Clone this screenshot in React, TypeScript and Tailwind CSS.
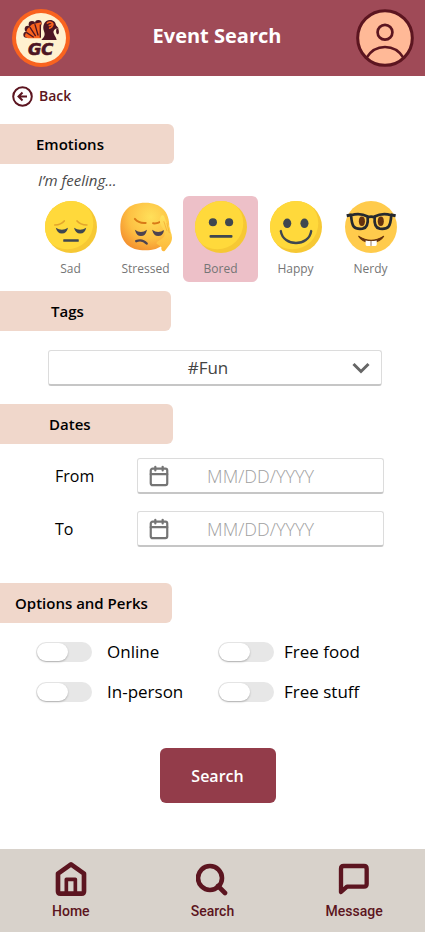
import { useState } from "react";
import type { ReactNode } from "react";
import { Calendar } from "lucide-react";

const INK = "#3f4750";

function Logo() {
  return (
    <svg viewBox="36 24 174 174" className="size-[58px]" role="img" aria-label="GC turkey logo">
      <circle cx="123" cy="111" r="87" fill="#f9631f" />
      <circle cx="123" cy="111" r="75" fill="#fff1cf" />
      <g fill="#4d1522">
        <circle cx="79" cy="101" r="9" />
        <circle cx="84" cy="84" r="10" />
        <circle cx="96" cy="70" r="10" />
        <circle cx="115" cy="67" r="10" />
      </g>
      <path d="M74 106 82 84 96 70 124 64 122 112H84Z" fill="#f9631f" />
      <g stroke="#4d1522" strokeWidth="4" strokeLinecap="round">
        <path d="M100 108 80 95" />
        <path d="M106 104 90 79" />
        <path d="M114 102 105 71" />
        <path d="M121 108V72" />
      </g>
      <path
        d="M124 117C134 108 136 101 132 91C126 75 133 57 150 57C161 57 167 64 168 73L177 83C171 82 166 84 166 84C160 88 159 93 162 99C165 106 169 111 170 117Z"
        fill="#4d1522"
      />
      <path d="M141 68C145 61 156 62 159 69C158 77 152 82 147 81M159 69 146 74" fill="none" stroke="#f9631f" strokeWidth="5" />
      <path d="M170 82c-3 8-2 16 2 18 5 1 6-8 3-16z" fill="#4d1522" />
      <text
        x="122"
        y="161"
        textAnchor="middle"
        fill="#4d1522"
        stroke="#4d1522"
        strokeWidth="2"
        fontSize="49"
        className="font-['DejaVu_Sans',sans-serif] font-bold italic"
      >
        GC
      </text>
    </svg>
  );
}

function Avatar() {
  return (
    <svg viewBox="431 29 172 172" className="size-[58px]" aria-hidden="true">
      <g fill="none" stroke="#5c1520" strokeWidth="9">
        <circle cx="517" cy="115" r="81" fill="#ffb997" />
        <circle cx="517" cy="98" r="22" strokeWidth="8" />
        <path d="M462 174C488 131 546 131 572 174" strokeWidth="8" />
      </g>
    </svg>
  );
}

function FaceBase({ id, children }: { id: string; children: ReactNode }) {
  return (
    <svg viewBox="0 0 154 154" className="size-[52px]" aria-hidden="true">
      <clipPath id={id}>
        <circle cx="77" cy="77" r="77" />
      </clipPath>
      <circle cx="77" cy="77" r="77" fill="#f6c834" />
      <circle cx="66" cy="66" r="77" fill="#ffd93b" clipPath={`url(#${id})`} />
      {children}
    </svg>
  );
}

function SadFace() {
  return (
    <FaceBase id="face-sad">
      <g fill={INK}>
        <path d="M32 79Q50 91 68 79Q65 96 50 96Q36 96 32 79Z" />
        <path d="M86 79Q104 91 122 79Q119 96 104 96Q90 96 86 79Z" />
        <rect x="54" y="113" width="46" height="8" rx="2" />
      </g>
      <g fill="none" stroke="#e3a52c" strokeWidth="5" strokeLinecap="round">
        <path d="M29 71Q48 70 57 59" />
        <path d="M95 59Q104 70 124 71" />
      </g>
    </FaceBase>
  );
}

function StressedFace() {
  return (
    <svg viewBox="0 0 154 154" className="size-[52px]" aria-hidden="true">
      <defs>
        <radialGradient id="stress-skin" cx="0.62" cy="0.3" r="0.75">
          <stop offset="0" stopColor="#ffe05a" />
          <stop offset="0.6" stopColor="#fdc043" />
          <stop offset="1" stopColor="#f4912f" />
        </radialGradient>
        <linearGradient id="stress-hand" x1="0" y1="0" x2="0" y2="1">
          <stop offset="0" stopColor="#ffe25c" />
          <stop offset="1" stopColor="#fdb93c" />
        </linearGradient>
      </defs>
      <path
        d="M75 5C122 5 146 32 146 76C146 122 121 146 75 146C28 146 1 122 1 76C1 31 28 5 75 5Z"
        fill="url(#stress-skin)"
      />
      <g fill="none" stroke="#d97a17" strokeWidth="6" strokeLinecap="round">
        <path d="M44 53Q56 67 76 65" />
        <path d="M98 66Q110 68 122 60" />
      </g>
      <g fill="#4d4350">
        <path d="M44 85Q62 98 80 85Q76 104 62 104Q49 104 44 85Z" />
        <path d="M95 85Q113 98 131 85Q127 104 113 104Q100 104 95 85Z" />
      </g>
      <path d="M48 119Q66 112 79 126" fill="none" stroke="#4d4350" strokeWidth="7" strokeLinecap="round" />
      <path
        d="M120 48C123 41 130 40 132 49L137 62C143 70 149 78 150 91C156 105 156 119 145 132L133 147C127 152 120 144 123 137L108 126C108 119 120 116 128 108C135 102 132 91 127 82C119 70 115 56 120 48Z"
        fill="url(#stress-hand)"
      />
      <g fill="none" stroke="#f3a52f" strokeWidth="2" strokeLinecap="round">
        <path d="M130 61 139 88" />
        <path d="M139 66 146 94" />
      </g>
    </svg>
  );
}

function BoredFace() {
  return (
    <FaceBase id="face-bored">
      <g fill={INK}>
        <circle cx="53" cy="63" r="12" />
        <circle cx="101" cy="63" r="12" />
        <rect x="43" y="101" width="68" height="8" rx="3" />
      </g>
    </FaceBase>
  );
}

function HappyFace() {
  return (
    <FaceBase id="face-happy">
      <g fill={INK}>
        <ellipse cx="51" cy="66" rx="12" ry="14" />
        <ellipse cx="102" cy="66" rx="12" ry="14" />
      </g>
      <path d="M32 89C39 136 115 136 122 89" fill="none" stroke={INK} strokeWidth="7" strokeLinecap="round" />
    </FaceBase>
  );
}

function NerdyFace() {
  return (
    <svg viewBox="0 0 154 154" className="size-[52px]" aria-hidden="true">
      <circle cx="77" cy="77" r="77" fill="#ffcb4c" />
      <g fill="#65320f">
        <ellipse cx="50" cy="60" rx="9" ry="14" />
        <ellipse cx="106" cy="60" rx="9" ry="14" />
      </g>
      <g fill="none" stroke="#26292f" strokeWidth="8" strokeLinejoin="round">
        <path d="M18 42C35 37 52 38 67 46C69 66 65 80 52 82C26 85 20 76 18 42Z" />
        <path d="M137 42C120 37 103 38 88 46C86 66 90 80 103 82C129 85 135 76 137 42Z" />
        <path d="M67 48Q77 44 88 48" />
        <path d="M5 44 20 41M150 44 135 41" strokeWidth="9" />
      </g>
      <path d="M40 104Q77 129 115 104Q103 123 77 123Q52 123 40 104Z" fill="#65320f" stroke="#65320f" strokeWidth="3" />
      <path d="M61 117Q77 120 94 117V129Q94 133 90 133H65Q61 133 61 129Z" fill="#fff" />
      <path d="M77 118v15" stroke="#65320f" strokeWidth="2" />
    </svg>
  );
}

const emotions: { name: string; face: ReactNode }[] = [
  { name: "Sad", face: <SadFace /> },
  { name: "Stressed", face: <StressedFace /> },
  { name: "Bored", face: <BoredFace /> },
  { name: "Happy", face: <HappyFace /> },
  { name: "Nerdy", face: <NerdyFace /> },
];

function SectionTitle({ children, className }: { children: ReactNode; className: string }) {
  return (
    <h2
      className={`flex h-10 items-center rounded-r-md bg-[#f0d7cb] text-[15px] font-semibold text-black ${className}`}
    >
      {children}
    </h2>
  );
}

function DateField({ label, id }: { label: string; id: string }) {
  return (
    <div className="flex items-center">
      <label htmlFor={id} className="w-[82px] shrink-0 text-base text-black">
        {label}
      </label>
      <div className="flex h-9 flex-1 items-center rounded-[3px] border border-b-2 border-[#dcdcdc] border-b-[#c6c6c6] px-2.5">
        <Calendar className="size-[22px] shrink-0 text-[#757575]" strokeWidth={2.4} />
        <input
          id={id}
          type="text"
          placeholder="MM/DD/YYYY"
          className="w-full min-w-0 pr-[22px] text-center text-lg font-light outline-none placeholder:text-[#a0a0a0]"
        />
      </div>
    </div>
  );
}

function Toggle({ label, className }: { label: string; className: string }) {
  return (
    <label className={`flex h-10 items-center text-[17px] text-black ${className}`}>
      <input
        type="checkbox"
        role="switch"
        className="flex h-5 w-14 shrink-0 appearance-none items-center rounded-full bg-[#e7e7e7] px-px before:h-[18px] before:w-[31px] before:rounded-full before:bg-white before:shadow-[0_1px_2px_rgba(0,0,0,0.25)] checked:justify-end checked:bg-[#933c4a]"
      />
      {label}
    </label>
  );
}

function HomeIcon() {
  return (
    <svg viewBox="163 66 96 108" className="h-9 w-8" fill="none" stroke="#5c1520" strokeWidth="14" aria-hidden="true">
      <path d="M172 104 211 76 250 104V157Q250 164 243 164H179Q172 164 172 157Z" strokeLinejoin="round" />
      <path d="M197 165V121H224V165" strokeWidth="11" strokeLinejoin="round" />
    </svg>
  );
}

function SearchIcon() {
  return (
    <svg viewBox="0 0 32 36" className="h-9 w-8" fill="none" stroke="#5c1520" strokeWidth="4.6" aria-hidden="true">
      <circle cx="14" cy="17" r="12" />
      <path d="m22 25 7 7" strokeLinecap="round" />
    </svg>
  );
}

function MessageIcon() {
  return (
    <svg viewBox="375 66 96 108" className="h-9 w-8" fill="none" stroke="#5c1520" strokeWidth="13" aria-hidden="true">
      <path d="M384 159V89Q384 81 392 81H453Q461 81 461 89V135Q461 143 453 143H402Z" strokeLinejoin="round" />
    </svg>
  );
}

const tabs: { name: string; icon: ReactNode }[] = [
  { name: "Home", icon: <HomeIcon /> },
  { name: "Search", icon: <SearchIcon /> },
  { name: "Message", icon: <MessageIcon /> },
];

export default function App() {
  const [emotion, setEmotion] = useState("Bored");

  return (
    <div className="flex min-h-screen flex-col bg-white font-['Open_Sans','Noto_Sans',sans-serif]">
      <header className="flex h-[76px] items-center justify-between bg-[#9f4a57] pr-[11px] pl-3">
        <Logo />
        <h1 className="pb-1 pl-2 text-xl font-bold text-white">Event Search</h1>
        <button type="button" aria-label="Profile">
          <Avatar />
        </button>
      </header>

      <main className="flex-1">
        <a href="#back" className="mb-2 ml-3 flex h-10 w-fit items-center gap-1.5 text-sm font-semibold text-[#5c1520]">
          <svg viewBox="0 0 21 21" className="size-[21px]" fill="none" stroke="currentColor" strokeWidth="2" aria-hidden="true">
            <circle cx="10.5" cy="10.5" r="9.3" />
            <path d="M15 10.5H7M10.5 6.5l-4 4 4 4" />
          </svg>
          Back
        </a>

        <SectionTitle className="w-[174px] pl-9">Emotions</SectionTitle>
        <fieldset>
          <legend className="flex h-8 items-center pl-[38px] text-[15px] text-[#4a4a4a] italic">I’m feeling...</legend>
          <div className="grid grid-cols-5 pr-[17px] pl-[33px]">
            {emotions.map(({ name, face }) => (
              <label
                key={name}
                className="flex h-[86px] flex-col items-center rounded-md pt-[5px] text-xs text-[#757575] has-checked:bg-[#edc0c8]"
              >
                <input
                  type="radio"
                  name="emotion"
                  className="sr-only"
                  checked={emotion === name}
                  onChange={() => setEmotion(name)}
                />
                {face}
                <span className="mt-2">{name}</span>
              </label>
            ))}
          </div>
        </fieldset>

        <SectionTitle className="mt-[9px] w-[171px] pl-[51px]">Tags</SectionTitle>
        <div className="mt-[19px] mr-[43px] ml-12 flex h-9 items-center rounded-[3px] border border-b-2 border-[#dcdcdc] border-b-[#c6c6c6] pr-2.5 pl-4">
          <select aria-label="Tag" className="w-full appearance-none text-center text-[17px] text-[#444] outline-none" defaultValue="#Fun">
            <option>#Fun</option>
            <option>#Food</option>
            <option>#Sports</option>
          </select>
          <svg viewBox="0 0 20 20" className="size-5 shrink-0" fill="none" stroke="#666" strokeWidth="3" aria-hidden="true">
            <path d="m2.500 6 7.500 7.500L17.500 6" />
          </svg>
        </div>

        <SectionTitle className="mt-[18px] w-[173px] pl-[49px]">Dates</SectionTitle>
        <div className="mt-[14px] mr-[41px] ml-[55px] flex flex-col gap-[17px]">
          <DateField label="From" id="date-from" />
          <DateField label="To" id="date-to" />
        </div>

        <SectionTitle className="mt-9 w-[172px] pl-[15px]">Options and Perks</SectionTitle>
        <div className="mt-[9px] grid grid-cols-[182fr_171fr] pr-9 pl-9">
          <Toggle label="Online" className="gap-[15px]" />
          <Toggle label="Free food" className="gap-2.5" />
          <Toggle label="In-person" className="gap-[15px]" />
          <Toggle label="Free stuff" className="gap-2.5" />
        </div>

        <div className="mt-9 mb-10 flex justify-center pl-2.5">
          <button type="button" className="h-[55px] w-[116px] rounded-md bg-[#933c4a] text-base font-semibold text-white">
            Search
          </button>
        </div>
      </main>

      <nav className="grid h-[83px] grid-cols-3 bg-[#d8d2cb] font-[Roboto,sans-serif]">
        {tabs.map(({ name, icon }) => (
          <a key={name} href={`#${name.toLowerCase()}`} className="flex flex-col items-center pt-3 text-sm font-medium text-[#5c1520]">
            {icon}
            <span className="mt-1">{name}</span>
          </a>
        ))}
      </nav>
    </div>
  );
}
